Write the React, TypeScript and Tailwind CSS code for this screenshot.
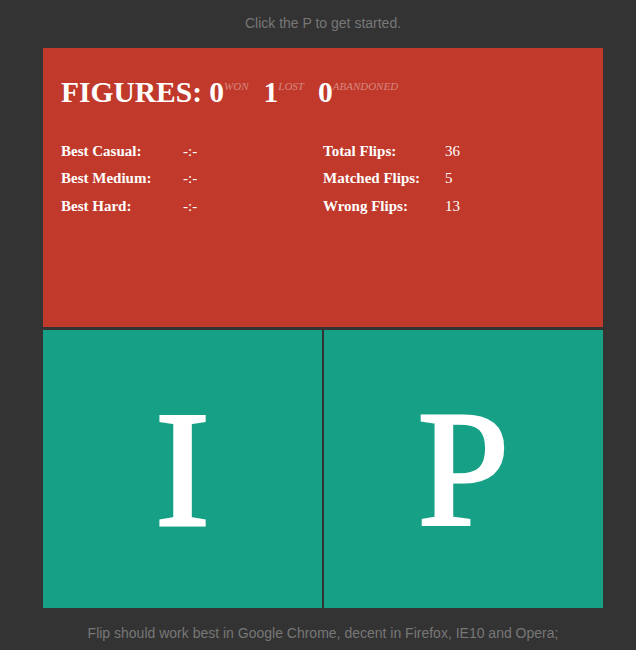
import React from "react";

const serif = { fontFamily: '"Liberation Serif", "Times New Roman", serif' };

const stats = [
  ["Best Casual:", "-:-", "Total Flips:", "36"],
  ["Best Medium:", "-:-", "Matched Flips:", "5"],
  ["Best Hard:", "-:-", "Wrong Flips:", "13"],
];

function Tile({ letter }: { letter: string }) {
  return (
    <div className="flex h-[278px] w-[279px] items-center justify-center bg-[#16a085]">
      <span className="text-[165px] font-normal leading-none text-white [-webkit-text-stroke:3px_white]" style={serif}>
        {letter}
      </span>
    </div>
  );
}

export default function App() {
  return (
    <div
      className="min-h-[650px] bg-[#333333] pt-[15px] text-[14px] text-[#777777]"
      style={{ fontFamily: '"Liberation Sans", Arial, sans-serif' }}
    >
      <div className="ml-[43px] w-[560px]">
        <p className="whitespace-nowrap text-center leading-[16px]">Click the P to get started.</p>

        <div className="mt-[17px] flex flex-col gap-[3px]">
          <div className="h-[279px] bg-[#c0392b] px-[18px] pt-[30px] text-white" style={serif}>
            <h1 className="whitespace-nowrap text-[29.5px] font-bold leading-none">
              FIGURES:{" "}
              <span>0</span>
              <span className="mr-[15px] align-[12px] text-[11px] font-normal italic leading-none text-white/40">WON</span>
              <span>1</span>
              <span className="mr-[14px] align-[12px] text-[11px] font-normal italic leading-none text-white/40">LOST</span>
              <span>0</span>
              <span className="align-[12px] text-[11px] font-normal italic leading-none text-white/40">ABANDONED</span>
            </h1>

            <div className="mt-[30px] text-[15px] leading-[27.5px]">
              {stats.map(([a, av, b, bv]) => (
                <div key={a} className="grid grid-cols-2">
                  <div className="flex">
                    <span className="w-[122px] font-bold">{a}</span>
                    <span>{av}</span>
                  </div>
                  <div className="flex">
                    <span className="w-[122px] font-bold">{b}</span>
                    <span>{bv}</span>
                  </div>
                </div>
              ))}
            </div>
          </div>

          <div className="flex gap-[2px]">
            <Tile letter="I" />
            <Tile letter="P" />
          </div>
        </div>

        <p className="mt-[17px] whitespace-nowrap text-center leading-[16px]">
          Flip should work best in Google Chrome, decent in Firefox, IE10 and Opera;
        </p>
      </div>
    </div>
  );
}
